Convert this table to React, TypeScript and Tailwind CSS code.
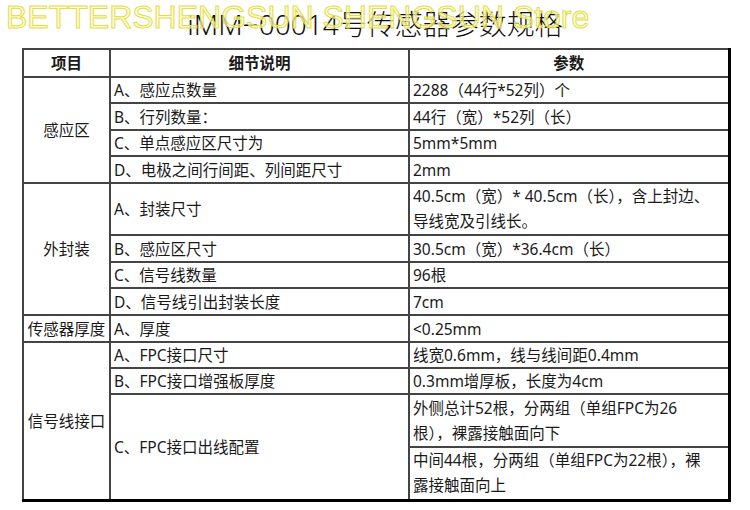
import { ReactNode } from "react";

type RowProps = {
  h: string;
  children: ReactNode;
};

const cell =
  "border-2 border-[#444] p-0 pl-[3px] text-left align-middle font-normal whitespace-nowrap";
const groupCell =
  "border-2 border-[#444] p-0 text-center align-middle font-normal whitespace-nowrap";
const twoLine = "leading-[25px]";

const Row = ({ h, children }: RowProps) => <tr className={h}>{children}</tr>;

export default function App() {
  return (
    <div className="relative h-[510px] w-[750px] overflow-hidden bg-white text-[#1a1a1a]">
      <div className="h-[48px] pt-[10px] text-center font-['Noto_Sans','Noto_Sans_CJK_SC',sans-serif] text-[28px] font-light leading-[28px] text-[#111]">
        iMM−00014号传感器参数规格
      </div>
      <div className="pointer-events-none absolute left-[6px] top-[1px] whitespace-nowrap font-['Liberation_Sans',sans-serif] text-[32px] leading-[32px] text-[#fdfbc6]/70 [-webkit-text-stroke:1px_#e4dc48]">
        BETTERSHENGSUN SHENGSUN Store
      </div>

      <table className="ml-[22px] w-[706px] table-fixed border-collapse border-r-[3px] border-b-[3px] border-black font-['Noto_Sans','Noto_Sans_CJK_SC',sans-serif] text-[15.5px] leading-[22px]">
        <colgroup>
          <col className="w-[87px]" />
          <col className="w-[299px]" />
          <col className="w-[320px]" />
        </colgroup>
        <tbody>
          <Row h="h-[28px]">
            <th className={`${groupCell} !font-bold`}>项目</th>
            <th className={`${groupCell} !font-bold`}>细节说明</th>
            <th className={`${groupCell} !font-bold`}>参数</th>
          </Row>

          <Row h="h-[26px]">
            <td rowSpan={4} className={groupCell}>
              感应区
            </td>
            <td className={cell}>A、感应点数量</td>
            <td className={cell}>2288（44行*52列）个</td>
          </Row>
          <Row h="h-[27px]">
            <td className={cell}>B、行列数量：</td>
            <td className={cell}>44行（宽）*52列（长）</td>
          </Row>
          <Row h="h-[26px]">
            <td className={cell}>C、单点感应区尺寸为</td>
            <td className={cell}>5mm*5mm</td>
          </Row>
          <Row h="h-[27px]">
            <td className={cell}>D、电极之间行间距、列间距尺寸</td>
            <td className={cell}>2mm</td>
          </Row>

          <Row h="h-[52px]">
            <td rowSpan={4} className={groupCell}>
              外封装
            </td>
            <td className={cell}>A、封装尺寸</td>
            <td className={`${cell} ${twoLine}`}>
              40.5cm（宽）* 40.5cm（长），含上封边、
              <br />
              导线宽及引线长。
            </td>
          </Row>
          <Row h="h-[27px]">
            <td className={cell}>B、感应区尺寸</td>
            <td className={cell}>30.5cm（宽）*36.4cm（长）</td>
          </Row>
          <Row h="h-[26px]">
            <td className={cell}>C、信号线数量</td>
            <td className={cell}>96根</td>
          </Row>
          <Row h="h-[27px]">
            <td className={cell}>D、信号线引出封装长度</td>
            <td className={cell}>7cm</td>
          </Row>

          <Row h="h-[27px]">
            <td className={groupCell}>传感器厚度</td>
            <td className={cell}>A、厚度</td>
            <td className={cell}>&lt;0.25mm</td>
          </Row>

          <Row h="h-[26px]">
            <td rowSpan={4} className={groupCell}>
              信号线接口
            </td>
            <td className={cell}>A、FPC接口尺寸</td>
            <td className={cell}>线宽0.6mm，线与线间距0.4mm</td>
          </Row>
          <Row h="h-[26px]">
            <td className={cell}>B、FPC接口增强板厚度</td>
            <td className={cell}>0.3mm增厚板，长度为4cm</td>
          </Row>
          <Row h="h-[53px]">
            <td rowSpan={2} className={cell}>
              C、FPC接口出线配置
            </td>
            <td className={`${cell} ${twoLine}`}>
              外侧总计52根，分两组（单组FPC为26
              <br />
              根），裸露接触面向下
            </td>
          </Row>
          <Row h="h-[53px]">
            <td className={`${cell} ${twoLine}`}>
              中间44根，分两组（单组FPC为22根），裸
              <br />
              露接触面向上
            </td>
          </Row>
        </tbody>
      </table>
    </div>
  );
}
